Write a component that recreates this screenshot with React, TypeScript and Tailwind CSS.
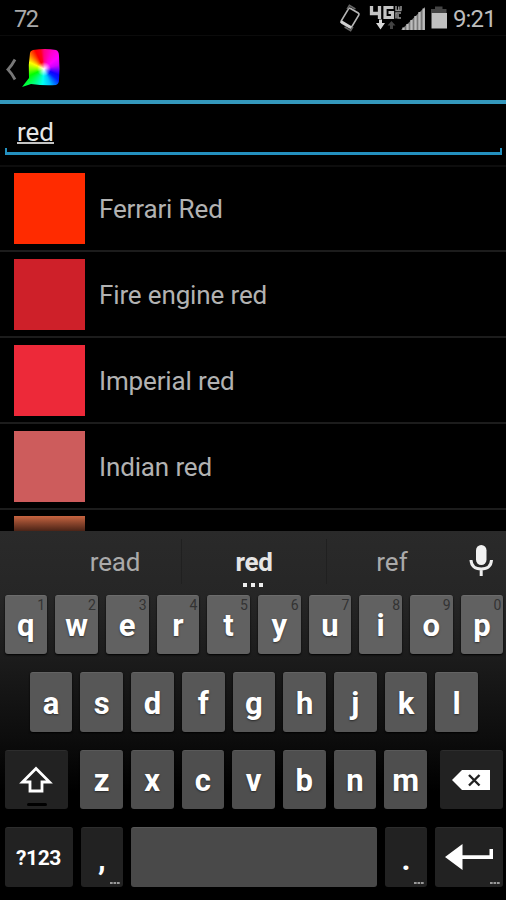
import React from "react";

const colors = [
  { name: "Ferrari Red", swatch: "bg-[#ff2b00]", line: "border-[#0d0d0d]" },
  { name: "Fire engine red", swatch: "bg-[#ce2029]", line: "border-[#1c1c1c]" },
  { name: "Imperial red", swatch: "bg-[#ed2939]", line: "border-[#1c1c1c]" },
  { name: "Indian red", swatch: "bg-[#cd5c5c]", line: "border-[#1c1c1c]" },
];

const topRow = ["q", "w", "e", "r", "t", "y", "u", "i", "o", "p"];
const homeRow = ["a", "s", "d", "f", "g", "h", "j", "k", "l"];
const bottomRow = ["z", "x", "c", "v", "b", "n", "m"];

const StatusBar = () => (
  <div className="flex h-9 shrink-0 items-center border-b border-[#0b0b0b] pl-[14px] pr-[10px] text-[#bdbdbd]">
    <span className="mt-[2px] text-[23.500px] leading-9 tracking-[-1.5px] text-[#a9a9a9]">72</span>
    <svg className="ml-auto h-9 w-[118px]" viewBox="335 0 118 36" fill="none">
      <g transform="rotate(31 350 18)">
        <rect x="344" y="9.500" width="12" height="17" rx="1.500" stroke="#b5b5b5" strokeWidth="1.700" />
        <path d="M344 25.500h12" stroke="#d0d0d0" strokeWidth="2.600" />
        <path d="M343 12V7.500h7M357 24v4.500h-7" stroke="#666" strokeWidth="1.500" />
      </g>
      <path d="M371.500 6v7.500h9M379.500 6v13" stroke="#c4c4c4" strokeWidth="3.300" />
      <path d="M393.500 7.500h-8.500v10h7.500v-5h-4" stroke="#c4c4c4" strokeWidth="3.200" />
      <path d="M396 6v4.500h5.500M398.800 6.500v4M401 6v4.500M401 13h-5v5.500M401 18h-3v-4" stroke="#959595" strokeWidth="1.500" />
      <path d="M379 19.500h3v3.500h3l-4.500 6.500-4.500-6.500h3z" fill="#d8d8d8" />
      <path d="M391.500 21l4 4.500h-2.500v3.500h-3v-3.500h-2.500z" fill="#444" />
      <path d="M401 30L425 7v23z" fill="#777" />
      <path d="M403.500 30v-2.500M407.500 30v-6M411.500 30v-10M415.500 30v-14M419.500 30v-18M423.700 30V8.500" stroke="#bcbcbc" strokeWidth="2.300" />
      <path d="M431 13V9h4V6.500h7.500V9h4v4z" fill="#444" />
      <path d="M431.500 13h15.500v15.500h-15.500z" fill="#c0c0c0" />
    </svg>
    <span className="mt-[3px] text-[24px] leading-9 tracking-[-0.8px]">9:21</span>
  </div>
);

const ActionBar = () => (
  <div className="flex h-[68px] shrink-0 items-start border-b-4 border-[#3498bd] pl-[6px]">
    <svg className="mt-[22px] h-[23px] w-[11px]" viewBox="0 0 11 23" fill="none">
      <path d="M9 1.500Q5.500 8 2 11.500Q5.500 15 9 21.500" stroke="#777" strokeWidth="2.800" />
    </svg>
    <div className="ml-[4px] mt-[13px] h-10 w-[40px] bg-[radial-gradient(circle_at_23px_20px,#fff_0%,#fff0_7px),conic-gradient(from_0deg_at_23px_20px,#ff0080,#ff00d0_25deg,#ff00ff_50deg,#d000ff_75deg,#1000ff_112deg,#0020ff_128deg,#00c0ff_158deg,#00fff0_185deg,#00ff60_222deg,#00ff00_245deg,#80ff00_268deg,#ffff00_295deg,#ff8000_315deg,#ff0000_335deg,#ff0020_350deg,#ff0080_360deg)] [clip-path:path('M12_1Q24_-1_35_1Q38_2_38_7Q39_20_38_31Q38_35_35_36Q24_37_10_35L1_38L8_29Q7_16_9_4Q9_2_12_1Z')]" />
  </div>
);

const SearchField = () => (
  <div className="h-[60.500px] shrink-0 pl-[5px] pr-1">
    <div className="h-[50px] pl-3 pt-[10px]">
      <span className="inline-block h-[30px] border-b-2 border-[#c4c4c4] text-[26px] leading-[36px] text-[#e6e6e6]">
        red
      </span>
    </div>
    <div className="-mt-[6px] h-[7px] border-x-2 border-b-[3px] border-[#2490bf]" />
  </div>
);

const ColorRow = ({ name, swatch, line }: { name: string; swatch: string; line: string }) => (
  <div className={`flex h-[85.900px] shrink-0 items-center border-t-2 pl-[14px] ${line}`}>
    <div className={`h-[71px] w-[71px] ${swatch}`} />
    <p className="ml-[14px] mt-[3px] text-[26px] tracking-[-0.14px] text-[#b2b2b2]">{name}</p>
  </div>
);

const LetterKey = ({ letter, tone, hint }: { letter: string; tone: string; hint?: string }) => (
  <div
    className={`relative flex h-[59.500px] w-[42.700px] shrink-0 items-center justify-center rounded-[3px] border-t shadow-[0_1px_2px_#000] ${tone}`}
  >
    <span className="mt-[2px] text-[31px] font-bold leading-none text-white [text-shadow:0_1px_2px_#0008]">{letter}</span>
    {hint && <span className="absolute right-[2px] top-[2px] text-[14px] leading-none text-[#333]">{hint}</span>}
  </div>
);

const dark = "relative flex h-[59.500px] shrink-0 items-center justify-center rounded-[3px] border-t border-[#2d2d2d] bg-[#222]";

const More = () => (
  <svg className="absolute bottom-[3px] right-[3px] h-[2px] w-[10px]" viewBox="0 0 10 2">
    <path d="M0 0h2.700v2H0zM3.500 0h2.700v2H3.500zM7 0h2.700v2H7z" fill="#999" />
  </svg>
);

const Suggestions = () => (
  <div className="flex h-[63.500px] text-[26px] leading-[63px] text-[#aaa]">
    <div className="w-[181px] pl-[49px] text-center tracking-[-0.2px]">read</div>
    <div className="relative w-[146px] text-center font-bold tracking-[-0.3px] text-[#e5e5e5]">
      red
      <div className="absolute left-0 top-2 h-[45px] w-px bg-[#202020]" />
      <div className="absolute right-0 top-2 h-[45px] w-px bg-[#202020]" />
      <svg className="absolute left-[61px] top-[52px] h-1 w-[22px]" viewBox="0 0 22 4">
        <path d="M1 0h4v4H1zM9 0h4v4H9zM17 0h4v4h-4z" fill="#eee" />
      </svg>
    </div>
    <div className="w-[130px] text-center">ref</div>
    <svg className="ml-[12px] mt-[12px] h-[36px] w-[24px]" viewBox="0 0 24 36" fill="none">
      <rect x="7" y="2" width="10.500" height="20" rx="5.200" fill="#f2f2f2" />
      <path d="M2 17Q2.500 26 12.200 26Q22 26 22.500 17M12.200 26v7" stroke="#eee" strokeWidth="3" />
    </svg>
  </div>
);

const Keyboard = () => (
  <div className="h-[369px] shrink-0 bg-[linear-gradient(#2a2a2a_0px,#262626_65px,#1b1b1b_130px,#0c0c0c_210px,#000_260px)]">
    <Suggestions />
    <div className="flex flex-col gap-[18px]">
      <div className="flex gap-2 pl-[4.500px]">
        {topRow.map((k, i) => (
          <LetterKey key={k} letter={k} hint={String((i + 1) % 10)} tone="bg-[#616161] border-[#6c6c6c]" />
        ))}
      </div>
      <div className="flex gap-2 pl-[29.800px]">
        {homeRow.map((k) => (
          <LetterKey key={k} letter={k} tone="bg-[#575757] border-[#636363]" />
        ))}
      </div>
      <div className="flex gap-2 pl-[4.500px]">
        <div className={`${dark} mr-[4.700px] w-[63px]`}>
          <svg className="h-[27px] w-[34px]" viewBox="0 0 34 27" fill="none">
            <path d="M17 2.500L30.500 16H23v9H11v-9H3.500z" stroke="#fff" strokeWidth="2.800" />
          </svg>
          <div className="absolute bottom-[3px] left-[22px] h-[3px] w-[20px] rounded bg-black" />
        </div>
        {bottomRow.map((k) => (
          <LetterKey key={k} letter={k} tone="bg-[#4e4e4e] border-[#595959]" />
        ))}
        <div className={`${dark} ml-[4.500px] w-[63px]`}>
          <svg className="h-5 w-[38px]" viewBox="0 0 38 20">
            <path d="M0 10L10 0h28v20H10z" fill="#fff" />
            <path d="M17 5l10.500 10.500M27.500 5L17 15.500" stroke="#222" strokeWidth="2.400" />
          </svg>
        </div>
      </div>
      <div className="flex gap-2 pl-[4.500px]">
        <div className={`${dark} w-[68px] text-[21px] font-bold tracking-[-0.4px] text-white`}>
          <span className="mt-[2px]">?123</span>
        </div>
        <div className={`${dark} w-[42.700px] text-[31px] font-bold text-white`}>
          <span className="mt-[6px]">,</span>
          <More />
        </div>
        <div className="h-[59.500px] w-[245.500px] shrink-0 rounded-[3px] border-t border-[#575757] bg-[#494949]" />
        <div className={`${dark} w-[42.700px] text-[31px] font-bold text-white`}>
          <span className="mt-[5px]">.</span>
          <More />
        </div>
        <div className={`${dark} w-[68px]`}>
          <svg className="h-[27px] w-[50px]" viewBox="0 0 50 27">
            <path d="M1 13L18.500 0v11.200h27V5h3.500v10H18.500V26z" fill="#fff" />
          </svg>
          <More />
        </div>
      </div>
    </div>
  </div>
);

export default function App() {
  return (
    <div className="flex h-[900px] w-[506px] flex-col overflow-hidden bg-black font-[Roboto,sans-serif]">
      <StatusBar />
      <ActionBar />
      <SearchField />
      <div className="flex min-h-0 flex-1 flex-col overflow-hidden">
        {colors.map((c) => (
          <ColorRow key={c.name} name={c.name} swatch={c.swatch} line={c.line} />
        ))}
        <div className="shrink-0 border-t-2 border-[#1c1c1c] pl-[14px] pt-[6px]">
          <div className="h-[15px] w-[71px] bg-linear-to-b from-[#c86541] to-[#4c2417]" />
        </div>
      </div>
      <Keyboard />
    </div>
  );
}
